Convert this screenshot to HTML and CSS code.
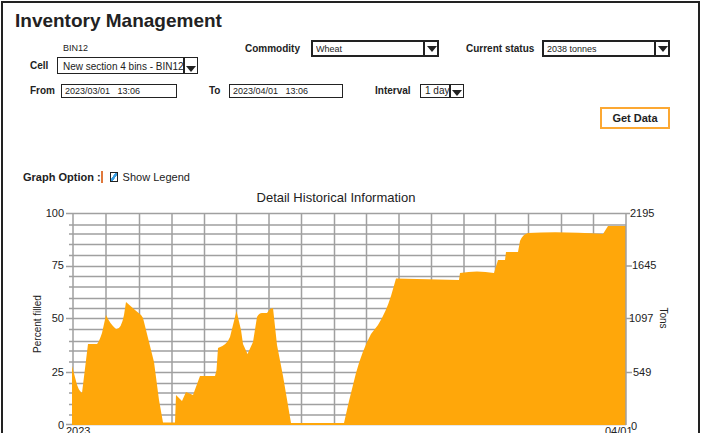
FILE: index.html
```html
<!DOCTYPE html>
<html lang="en">
<head>
<meta charset="utf-8">
<meta name="viewport" content="width=device-width, initial-scale=1">
<title>Inventory Management</title>
<link rel="stylesheet" href="styles.css">
</head>
<body>
<main class="frame">
  <h1 class="title">Inventory Management</h1>
  <form class="filters">
    <div class="row row-top">
      <div class="field cell">
        <span class="caption">BIN12</span>
        <label for="cell">Cell</label>
        <span class="select"><select id="cell"><option>New section 4 bins - BIN12</option></select></span>
      </div>
      <div class="field commodity">
        <label for="commodity">Commodity</label>
        <span class="select boxed"><select id="commodity"><option>Wheat</option></select></span>
      </div>
      <div class="field status">
        <label for="status">Current status</label>
        <span class="select boxed"><select id="status"><option>2038 tonnes</option></select></span>
      </div>
    </div>
    <div class="row row-dates">
      <div class="field from">
        <label for="from">From</label>
        <input id="from" type="text" value="2023/03/01   13:06">
      </div>
      <div class="field to">
        <label for="to">To</label>
        <input id="to" type="text" value="2023/04/01   13:06">
      </div>
      <div class="field interval">
        <label for="interval">Interval</label>
        <span class="select small"><select id="interval"><option>1 day</option></select></span>
      </div>
    </div>
    <div class="actions"><button type="button" class="get-data">Get Data</button></div>
  </form>
  <div class="options">
    <span class="options-label">Graph Option :</span>
    <input id="legend" type="checkbox" class="check" checked>
    <label for="legend" class="legend-label">Show Legend</label>
  </div>
  <h2 class="chart-title">Detail Historical Information</h2>
  <svg class="chart" viewBox="3 205 695 236" role="img" aria-label="Detail Historical Information">
    <path class="grid" d="M66 213.5H630M69 225H626M69 234H626M69 244.500H626M69 255.500H626M66 266.500H626M69 276.500H626M69 287H626M69 298.500H626M69 308.500H626M66 318.500H626M69 329.500H626M69 341.500H626M69 351H626M69 362H626M66 372.500H626M69 383.500H626M69 393H626M69 404.500H626M69 415H626M66 424.500H626"/>
    <path class="grid" d="M73 213V425M106 213V425M139.500 213V425M172 213V425M204.500 213V425M236.500 213V425M269 213V425M301.500 213V425M334.500 213V425M366.500 213V425M399 213V425M431.500 213V425M464 213V425M495.500 213V425M528.500 213V425M561.500 213V425M593.500 213V425"/>
    <path class="area" d="M72 425V366L76 381Q78 390 82 393L88 344H97Q99 342 102 333L106 315Q110 324 116 329Q121 330 124 315L126 302L135 310L141 315L143 318L148 338L154 362L159 400L163 422.500H175L176 395L182 401L186 392L193 395L200 376H215L216.500 370L218 348Q227 345 230 337L236.500 311L241 330L243 344L247.500 354L253 342L257 317Q259 313 262 313H267L270 309L273 308L277 345L283 376L291 423H344L349 401L356 373Q362 351 371 334L378 325Q386 312 391 296L396 278.500L459 280L460 273Q477 270 494 273L498 260H505L506 252H518L520 241Q523 234 528 233Q560 231 603 234L608 226H626V425Z"/>
    <path class="grid" d="M626 213V425M626 266H632M626 318.500H632M626 372.500H632"/>
    <g class="ticks left"><text x="64" y="217">100</text><text x="64" y="269">75</text><text x="64" y="322">50</text><text x="64" y="376">25</text><text x="64" y="429">0</text></g>
    <g class="ticks"><text x="630" y="217">2195</text><text x="632" y="269">1645</text><text x="629" y="322">1097</text><text x="633" y="376">549</text><text x="631" y="430">0</text><text x="66" y="435">2023</text><text x="605" y="435">04/01</text></g>
    <text class="axis" transform="translate(41 324) rotate(-90)">Percent filled</text>
    <text class="axis" transform="translate(660 318) rotate(90)">Tons</text>
  </svg>
</main>
</body>
</html>
```
FILE: styles.css
```css
* { box-sizing: border-box; }
body {
  margin: 0;
  height: 100vh;
  overflow: hidden;
  background: #fff;
  color: #222;
  font: 10px/12px "Liberation Sans", Arial, sans-serif;
}
.frame {
  margin: 1px 1px 0;
  border: 2px solid #222;
  border-bottom: 0;
  min-height: 100vh;
}
.title {
  margin: 0;
  padding: 6px 12px 0;
  font-size: 19px;
  line-height: 24px;
}
.filters { padding: 7px 28px 0 27px; }
.row { display: flex; }
.row-top { align-items: flex-start; }
.field { display: flex; align-items: center; min-width: 0; }
.field label { font-weight: bold; white-space: nowrap; }
.cell {
  display: grid;
  grid-template-columns: 27px 1fr;
  flex: 168;
  margin-right: 47px;
}
.caption { grid-column: 2; padding: 2px 6px 0; height: 17px; font-size: 9px; }
.commodity { flex: 194; margin-right: 27px; }
.commodity label { width: 66px; }
.status { flex: 204; }
.status label { width: 76px; }
.select { position: relative; display: flex; flex: 1; min-width: 0; }
.select select {
  appearance: none;
  width: 100%;
  height: 17px;
  margin: 0;
  padding: 2px 13px 0 5px;
  border: 1px solid #222;
  border-radius: 0;
  background: linear-gradient(#222, #222) right 12px top / 2px 100% no-repeat #fff;
  color: #222;
  font: inherit;
}
.select.boxed select { border-width: 2px; padding: 0 13px 0 3px; font-size: 9px; }
.select::after {
  content: "";
  position: absolute;
  right: 2px;
  bottom: 2px;
  width: 10px;
  height: 6px;
  background: #222;
  clip-path: polygon(0 0, 100% 0, 50% 100%);
  pointer-events: none;
}
.select.boxed::after { bottom: 5px; }
.select.small select { height: 14px; padding: 0 13px 0 4px; }
.row-dates { margin: 10px 0 0; padding-right: 206px; }
.field input {
  flex: 1;
  min-width: 0;
  height: 14px;
  margin: 0;
  padding: 0 3px;
  border: 1px solid #222;
  border-radius: 0;
  color: #222;
  font: inherit;
  font-size: 9px;
  white-space: pre;
}
.from { flex: 147; margin-right: 32px; }
.from label { width: 31px; }
.to { flex: 134; margin-right: 32px; }
.to label { width: 20px; }
.interval { flex: 89; }
.interval label { width: 45px; }
.actions { display: flex; justify-content: flex-end; margin-top: 9px; }
.get-data {
  width: 70px;
  height: 22px;
  padding: 0;
  border: 2px solid #fca833;
  background: #fff;
  color: #222;
  font: inherit;
  font-size: 11px;
  font-weight: bold;
}
.options { display: flex; align-items: center; padding: 42px 20px 0; font-size: 11px; }
.options-label { border-right: 2px solid #e0783c; font-weight: bold; }
.check {
  appearance: none;
  width: 8px;
  height: 10px;
  margin: 0 5px 0 7px;
  border: 1px solid #222;
  background: linear-gradient(125deg, #fff 34%, #3a9de0 38%, #3a9de0 62%, #fff 66%);
}
.chart-title {
  margin: 7px 0 0;
  padding-right: 29px;
  font-size: 13px;
  line-height: 15px;
  font-weight: normal;
  text-align: center;
}
.chart { display: block; width: 100%; height: auto; }
.grid { fill: none; stroke: #a0a0a0; stroke-width: 1.5; }
.area { fill: #ffa70a; }
.ticks { font-size: 11px; fill: #222; }
.left { text-anchor: end; }
.axis { font-size: 10px; fill: #222; text-anchor: middle; }
```
